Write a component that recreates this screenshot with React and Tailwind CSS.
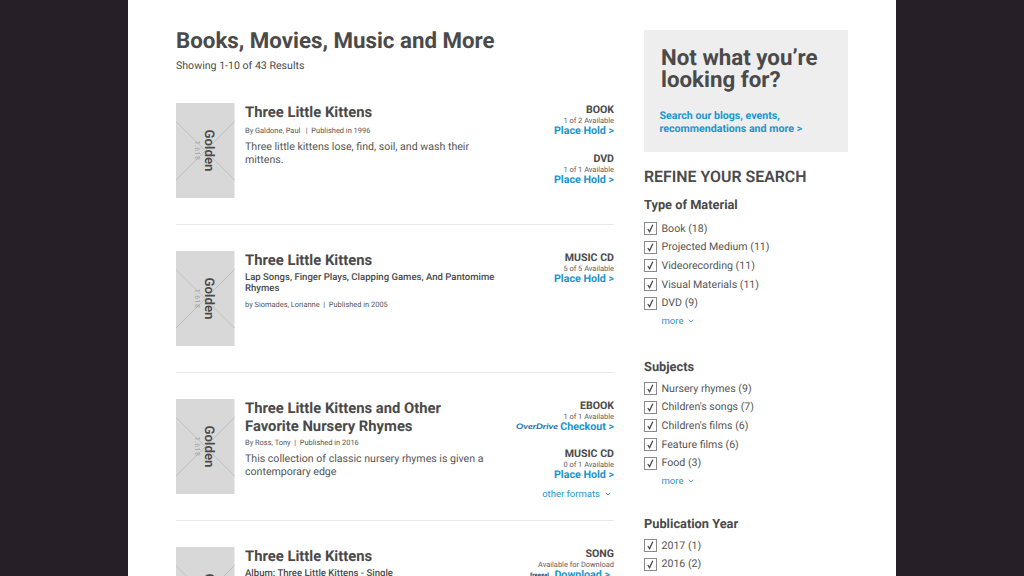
import { ChevronDown } from 'lucide-react';

const results = [
    {
        title: 'Three Little Kittens',
        by: 'By Galdone, Paul \u00a0 | \u00a0Published in 1996',
        bySpacing: 'mt-[4.5px]',
        description: 'Three little kittens lose, find, soil, and wash their mittens.',
        formats: [
            { type: 'BOOK', status: '1 of 2 Available', action: 'Place Hold >' },
            { type: 'DVD', status: '1 of 1 Available', action: 'Place Hold >' },
        ],
    },
    {
        title: 'Three Little Kittens',
        subtitle: 'Lap Songs, Finger Plays, Clapping Games, And Pantomime Rhymes',
        by: 'by Siomades, Lorianne \u00a0| \u00a0Published in 2005',
        bySpacing: 'mt-[6.5px]',
        formats: [{ type: 'MUSIC CD', status: '5 of 5 Available', action: 'Place Hold >' }],
    },
    {
        title: 'Three Little Kittens and Other Favorite Nursery Rhymes',
        by: 'By Ross, Tony \u00a0| \u00a0Published in 2016',
        bySpacing: 'mt-[2.5px]',
        description: 'This collection of classic nursery rhymes is given a contemporary edge',
        formats: [
            { type: 'EBOOK', status: '1 of 1 Available', action: 'Checkout >', vendor: 'overdrive' },
            { type: 'MUSIC CD', status: '0 of 1 Available', action: 'Place Hold >' },
        ],
        more: true,
    },
    {
        title: 'Three Little Kittens',
        subtitle: 'Album: Three Little Kittens - Single',
        formats: [{ type: 'SONG', status: 'Available for Download', action: 'Download >', vendor: 'freegal' }],
    },
];

const filters = [
    {
        name: 'Type of Material',
        options: ['Book (18)', 'Projected Medium (11)', 'Videorecording (11)', 'Visual Materials (11)', 'DVD (9)'],
    },
    {
        name: 'Subjects',
        options: ['Nursery rhymes (9)', "Children's songs (7)", "Children's films (6)", 'Feature films (6)', 'Food (3)'],
    },
    {
        name: 'Publication Year',
        options: ['2017 (1)', '2016 (2)', '2015 (4)'],
    },
];

// Placeholder cover with the crossed lines and rotated label
const Cover = () => (
    <svg className="w-[58.5px] h-[95px] shrink-0" viewBox="0 0 58.5 95">
        <rect width="58.5" height="95" fill="#d8d8d8" />
        <path d="M0 18.5 58.5 77M58.5 18.5 0 77" stroke="#bdbdbd" strokeWidth="1" />
        <g transform="rotate(90)" textAnchor="middle" fontFamily="Roboto, sans-serif">
            <text x="47.5" y="-18.5" fontSize="7" letterSpacing="0.4" fill="#a2a2a2">1.618</text>
            <text x="47.5" y="-28.8" fontSize="13.2" fontWeight="600" fill="#4a4a4a">Golden</text>
        </g>
    </svg>
);

const Vendor = ({ name }) => {
    if (name === 'overdrive') {
        return (
            <svg className="w-[43px] h-[9px] mr-px" viewBox="0 0 43 9">
                <text x="0" y="7" textLength="42" lengthAdjust="spacingAndGlyphs" fontFamily="Lato, sans-serif" fontSize="7.6" fontWeight="700" fontStyle="italic" fill="#1c6fa8">OverDrive</text>
            </svg>
        );
    }
    return (
        <svg className="w-[19px] h-[9px] mr-[5px]" viewBox="0 0 19 9">
            <text x="0" y="7" textLength="19" lengthAdjust="spacingAndGlyphs" fontFamily="Open Sans, sans-serif" fontSize="6" fontWeight="800" fill="#27558c">freegal</text>
        </svg>
    );
};

const Format = ({ format, compact }) => (
    <div className={`flex flex-col items-end text-right leading-[11px] ${compact ? 'h-12' : 'h-[49px]'}`}>
        <div className="text-[10.6px] font-bold">{format.type}</div>
        <div className="-mb-px text-[7.45px] leading-[11px] text-[#5c5c5c]">{format.status}</div>
        <div className="flex items-center text-[10.7px] font-bold text-[#1b95cf]">
            {format.vendor && <Vendor name={format.vendor} />}
            <span className={format.vendor === 'freegal' ? 'mr-1' : ''}>{format.action}</span>
        </div>
    </div>
);

const Result = ({ item }) => (
    <article className="flex h-[122px] mb-[26px] border-b border-[#e8e8e8]">
        <Cover />
        <div className="ml-[10.5px] w-[256px] shrink-0 pt-px">
            <h2 className="w-[224px] text-[14.8px] leading-[17.5px] font-bold">{item.title}</h2>
            {item.subtitle && <p className="mt-0.5 text-[9.55px] leading-[11px] font-medium">{item.subtitle}</p>}
            {item.by && <p className={`text-[7.45px] leading-[10px] text-[#555] ${item.bySpacing}`}>{item.by}</p>}
            {item.description && (
                <p className="mt-1 w-[245px] text-[10.6px] leading-[13px] text-[#555]">{item.description}</p>
            )}
        </div>
        <div className="flex-1 flex flex-col items-end pt-px">
            {item.formats.map((format) => <Format key={format.type} format={format} compact={item.more} />)}
            {item.more && (
                <button className="flex items-center gap-1 -mt-2 mr-0.5 text-[9.5px] leading-[11px] text-[#1b95cf]">
                    other formats <ChevronDown className="w-2 h-2" strokeWidth={2.5} />
                </button>
            )}
        </div>
    </article>
);

const FilterGroup = ({ filter }) => (
    <section className="group mb-[27.5px] first-of-type:mb-[30.5px]">
        <h3 className="text-[12.8px] leading-4 font-bold mb-[3.5px] group-first-of-type:mb-[5.5px]">{filter.name}</h3>
        {filter.options.map((option) => (
            <label key={option} className="flex items-center h-[18.6px] text-[10.6px] text-[#555]">
                <span className="w-[13px] h-[13px] mr-[4.5px] border border-[#8a8a8a] flex items-center justify-center">
                    <svg className="w-[9px] h-[9px]" viewBox="0 0 9 9" fill="none">
                        <path d="M1.8 5 3.6 7.6 6.8 0.8" stroke="#4a4a4a" strokeWidth="1.3" />
                    </svg>
                </span>
                {option}
            </label>
        ))}
        <button className="flex items-center gap-1 h-[17px] ml-[17.5px] text-[9.5px] text-[#1b95cf]">
            more <ChevronDown className="w-2 h-2" strokeWidth={2.5} />
        </button>
    </section>
);

const App = () => {
    return (
        <div className="h-screen overflow-hidden bg-[#261f27] flex justify-center font-['Roboto',sans-serif] text-[#4a4a4a] [text-rendering:geometricPrecision]">
            <div className="w-[768px] h-full overflow-hidden bg-white pl-12 pr-12 pt-[30px] flex items-start justify-between">
                <main className="w-[438px]">
                    <h1 className="text-[22.3px] leading-[22px] font-bold">Books, Movies, Music and More</h1>
                    <p className="mt-[7px] mb-[31px] text-[10.6px] leading-[13px]">Showing 1-10 of 43 Results</p>
                    {results.map((item, i) => <Result key={i} item={item} />)}
                </main>
                <aside className="w-[204px]">
                    <div className="h-[122px] bg-[#eeeeee] pl-4 pt-[16.5px]">
                        <h2 className="ml-px text-[22.3px] leading-[22px] font-bold">Not what you’re<br />looking for?</h2>
                        <p className="mt-[18.5px] -ml-[0.5px] text-[10.65px] leading-[13px] font-bold text-[#1b95cf]">
                            Search our blogs, events,<br />recommendations and more &gt;
                        </p>
                    </div>
                    <h2 className="mt-[15px] mb-[11px] text-[15.9px] leading-[20px] font-semibold">REFINE YOUR SEARCH</h2>
                    {filters.map((filter) => <FilterGroup key={filter.name} filter={filter} />)}
                </aside>
            </div>
        </div>
    );
};

export default App;
